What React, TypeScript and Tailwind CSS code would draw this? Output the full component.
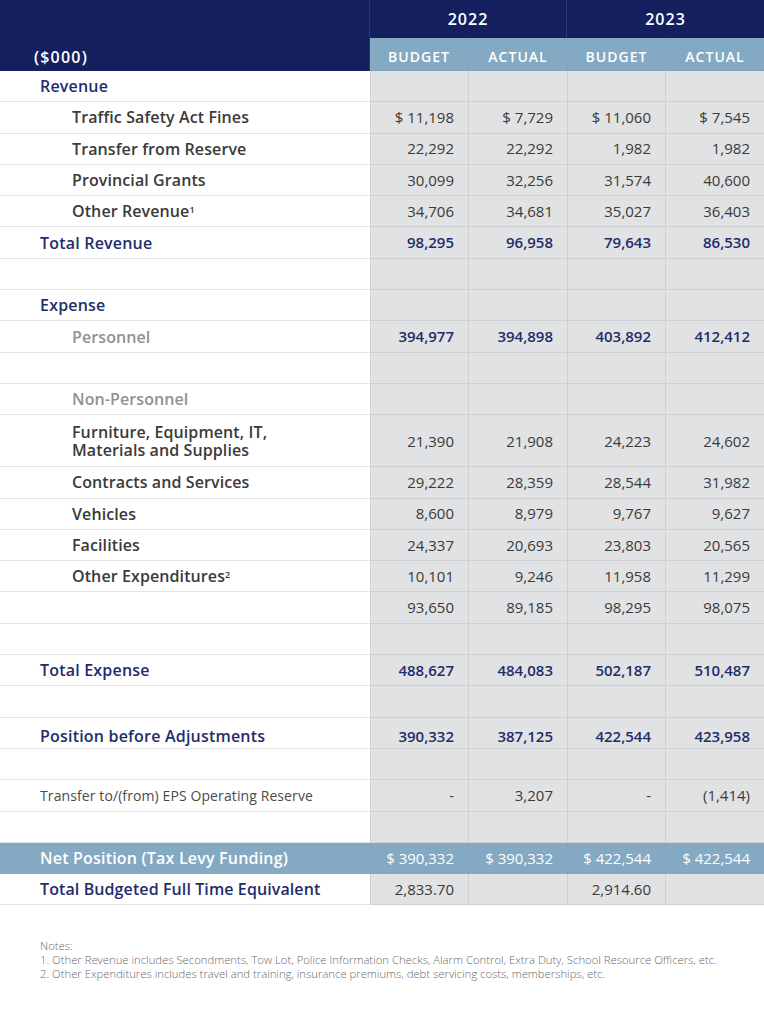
import React from 'react';

type Kind = 'section' | 'item' | 'total' | 'muted' | 'blank' | 'sub' | 'small' | 'net' | 'fte';

type Row = {
  kind: Kind;
  label?: string;
  sup?: string;
  vals?: string[];
  strong?: boolean;
  tall?: boolean;
  low?: boolean;
};

const rows: Row[] = [
  { kind: 'section', label: 'Revenue' },
  { kind: 'item', label: 'Traffic Safety Act Fines', vals: ['$ 11,198', '$ 7,729', '$ 11,060', '$ 7,545'] },
  { kind: 'item', label: 'Transfer from Reserve', vals: ['22,292', '22,292', '1,982', '1,982'] },
  { kind: 'item', label: 'Provincial Grants', vals: ['30,099', '32,256', '31,574', '40,600'] },
  { kind: 'item', label: 'Other Revenue', sup: '1', vals: ['34,706', '34,681', '35,027', '36,403'] },
  { kind: 'total', label: 'Total Revenue', vals: ['98,295', '96,958', '79,643', '86,530'] },
  { kind: 'blank' },
  { kind: 'section', label: 'Expense' },
  { kind: 'muted', label: 'Personnel', vals: ['394,977', '394,898', '403,892', '412,412'], strong: true },
  { kind: 'blank' },
  { kind: 'muted', label: 'Non-Personnel' },
  { kind: 'item', label: 'Furniture, Equipment, IT, Materials and Supplies', vals: ['21,390', '21,908', '24,223', '24,602'], tall: true },
  { kind: 'item', label: 'Contracts and Services', vals: ['29,222', '28,359', '28,544', '31,982'] },
  { kind: 'item', label: 'Vehicles', vals: ['8,600', '8,979', '9,767', '9,627'] },
  { kind: 'item', label: 'Facilities', vals: ['24,337', '20,693', '23,803', '20,565'] },
  { kind: 'item', label: 'Other Expenditures', sup: '2', vals: ['10,101', '9,246', '11,958', '11,299'] },
  { kind: 'sub', vals: ['93,650', '89,185', '98,295', '98,075'] },
  { kind: 'blank' },
  { kind: 'total', label: 'Total Expense', vals: ['488,627', '484,083', '502,187', '510,487'] },
  { kind: 'blank' },
  { kind: 'total', label: 'Position before Adjustments', vals: ['390,332', '387,125', '422,544', '423,958'], low: true },
  { kind: 'blank' },
  { kind: 'small', label: 'Transfer to/(from) EPS Operating Reserve', vals: ['-', '3,207', '-', '(1,414)'] },
  { kind: 'blank' },
  { kind: 'net', label: 'Net Position (Tax Levy Funding)', vals: ['$ 390,332', '$ 390,332', '$ 422,544', '$ 422,544'] },
  { kind: 'fte', label: 'Total Budgeted Full Time Equivalent', vals: ['2,833.70', '', '2,914.60', ''] },
];

const labelClass = (kind: Kind) => {
  switch (kind) {
    case 'section':
    case 'total':
      return 'pl-[40px] text-[16px] font-semibold tracking-[0.2px] text-[#1f2d6b]';
    case 'fte':
      return 'pl-[40px] text-[16px] font-semibold tracking-[0.1px] text-[#1f2d6b]';
    case 'muted':
      return 'pl-[72px] text-[16px] font-semibold tracking-[0.1px] text-[#8e9196]';
    case 'small':
      return 'pl-[40px] text-[14px] tracking-[0.1px] text-[#4b4b4b]';
    case 'net':
      return 'pl-[40px] text-[16px] font-semibold tracking-[0.2px] text-white';
    default:
      return 'pl-[72px] text-[16px] font-semibold tracking-[0.1px] text-[#3a3a3a]';
  }
};

const valClass = (r: Row) => {
  if (r.kind === 'total' || r.strong) return 'font-semibold text-[#1f2d6b]';
  if (r.kind === 'net') return 'text-white';
  return 'text-[#3a3a3a]';
};

function TableRow({ r }: { r: Row }) {
  const net = r.kind === 'net';
  const h = r.tall ? 'h-[52px]' : 'h-[31.3px]';
  const vals = r.vals ?? ['', '', '', ''];
  const low = r.low ? 'pt-[6px]' : '';
  return (
    <div className={`grid grid-cols-[370px_98px_99px_98px_99px] ${h}`}>
      <div
        className={`flex flex-col justify-center border-b ${low} ${
          net ? 'bg-[#83a9c3] border-[#83a9c3]' : 'bg-white border-[#e4e4e4]'
        } ${labelClass(r.kind)}`}
      >
        {r.tall ? (
          <span className="w-[230px] leading-[18px]">{r.label}</span>
        ) : (
          <span>
            {r.label}
            {r.sup && <sup className="text-[9px] font-semibold">{r.sup}</sup>}
          </span>
        )}
      </div>
      {vals.map((v, i) => (
        <div
          key={i}
          className={`flex items-center justify-end pr-[14px] text-[15px] ${low} ${
            net
              ? 'bg-[#83a9c3] border-l border-dotted border-[#9b93b4]'
              : 'bg-[#e1e2e4] border-b border-l border-[#cfd0d3]'
          } ${valClass(r)}`}
        >
          {v}
        </div>
      ))}
    </div>
  );
}

export default function App() {
  return (
    <div className="w-[764px] min-h-[1024px] bg-white font-['Open_Sans',sans-serif]">
      {/* header */}
      <div className="grid grid-cols-[370px_197px_197px] bg-[#14205e] text-white">
        <div className="row-span-2 flex items-end pl-[34px] border-r border-dotted border-[#3b4680]">
          <span className="text-[16px] font-semibold tracking-[1.2px] leading-[28px]">($000)</span>
        </div>
        <div className="h-[38px] flex items-center justify-center text-[16px] font-semibold tracking-[1px] border-r border-[#2b3870]">
          2022
        </div>
        <div className="h-[38px] flex items-center justify-center text-[16px] font-semibold tracking-[1px]">
          2023
        </div>
        <div className="col-span-2 grid grid-cols-[98px_99px_98px_99px] h-[33px] bg-[#83a9c3] border-b border-dotted border-[#8f8aac]">
          {['BUDGET', 'ACTUAL', 'BUDGET', 'ACTUAL'].map((t, i) => (
            <div
              key={i}
              className={`flex items-center justify-center pt-[5px] text-[14px] font-semibold tracking-[1px] ${
                i > 0 ? 'border-l border-dotted border-[#9b93b4]' : ''
              }`}
            >
              {t}
            </div>
          ))}
        </div>
      </div>

      {rows.map((r, i) => (
        <TableRow key={i} r={r} />
      ))}

      {/* notes */}
      <div className="pl-[40px] pt-[34px] text-[11.3px] leading-[14px] font-light text-[#6a6a6a]">
        <p>Notes:</p>
        <p>1. Other Revenue includes Secondments, Tow Lot, Police Information Checks, Alarm Control, Extra Duty, School Resource Officers, etc.</p>
        <p>2. Other Expenditures includes travel and training, insurance premiums, debt servicing costs, memberships, etc.</p>
      </div>
    </div>
  );
}
